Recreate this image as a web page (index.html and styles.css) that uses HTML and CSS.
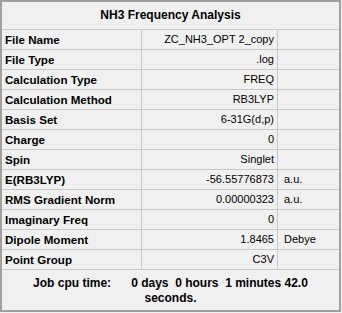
FILE: index.html
```html
<!DOCTYPE html>
<html>
<head>
<meta charset="utf-8">
<link rel="stylesheet" href="styles.css">
</head>
<body>
<div class="panel">
  <div class="title">NH3 Frequency Analysis</div>
  <div class="grid">
    <div class="lab">File Name</div><div class="val">ZC_NH3_OPT 2_copy</div><div class="unit"></div>
    <div class="lab">File Type</div><div class="val">.log</div><div class="unit"></div>
    <div class="lab">Calculation Type</div><div class="val">FREQ</div><div class="unit"></div>
    <div class="lab">Calculation Method</div><div class="val">RB3LYP</div><div class="unit"></div>
    <div class="lab">Basis Set</div><div class="val">6-31G(d,p)</div><div class="unit"></div>
    <div class="lab">Charge</div><div class="val">0</div><div class="unit"></div>
    <div class="lab">Spin</div><div class="val">Singlet</div><div class="unit"></div>
    <div class="lab">E(RB3LYP)</div><div class="val">-56.55776873</div><div class="unit">a.u.</div>
    <div class="lab">RMS Gradient Norm</div><div class="val">0.00000323</div><div class="unit">a.u.</div>
    <div class="lab">Imaginary Freq</div><div class="val">0</div><div class="unit"></div>
    <div class="lab">Dipole Moment</div><div class="val">1.8465</div><div class="unit">Debye</div>
    <div class="lab">Point Group</div><div class="val">C3V</div><div class="unit"></div>
  </div>
  <div class="job"><span class="job-lab">Job cpu time:</span>0 days&nbsp; 0 hours&nbsp; 1 minutes 42.0 seconds.</div>
</div>
</body>
</html>
```
FILE: styles.css
```css
html, body {
  margin: 0;
  padding: 0;
  background: #f0f0f0;
}
body {
  font-family: "Liberation Sans", Arial, sans-serif;
  color: #000;
}
.panel {
  width: 337px;
  height: 308px;
  border: 2px solid #a0a0a0;
  background: #f0f0f0;
}
.title {
  height: 27px;
  line-height: 27px;
  text-align: center;
  font-weight: bold;
  font-size: 12px;
  border-bottom: 1px solid #c8c8c8;
}
.grid {
  display: grid;
  grid-template-columns: 140px 136px 61px;
  grid-auto-rows: 20px;
}
.grid > div {
  border-bottom: 1px solid #c8c8c8;
  line-height: 19px;
  white-space: nowrap;
  overflow: hidden;
}
.lab {
  border-right: 1px solid #c8c8c8;
  font-weight: bold;
  font-size: 11.6px;
  padding-left: 3px;
}
.val {
  border-right: 1px solid #c8c8c8;
  font-size: 11px;
  text-align: right;
  padding-right: 3px;
}
.unit {
  font-size: 11px;
  padding-left: 6px;
}
.job {
  height: 40px;
  padding: 6px 20px 0;
  box-sizing: border-box;
  text-align: center;
  font-weight: bold;
  font-size: 12px;
  line-height: 15px;
}
.job-lab {
  margin-right: 20px;
}
```
